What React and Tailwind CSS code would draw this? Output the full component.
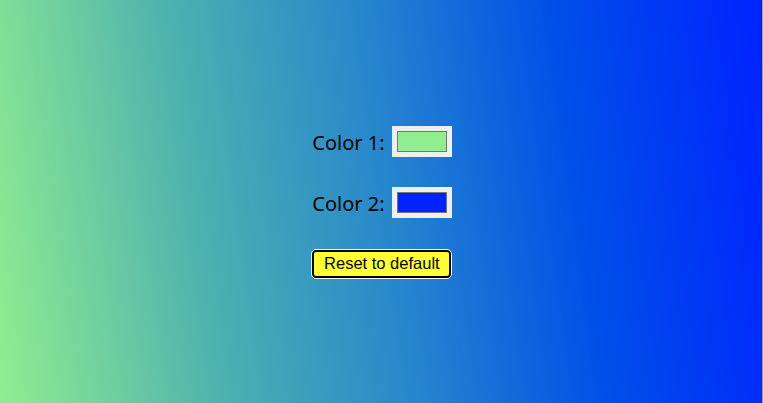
import React from 'react';

function Swatch({ color }) {
    return (
        <div className="w-[60px] h-[31px] bg-[#efefef] p-[5px] flex">
            <div className="flex-1 border border-[#767676]" style={{ backgroundColor: color }} />
        </div>
    );
}

function App() {
    const color1 = '#90ee90';
    const color2 = '#0022ff';

    return (
        <div className="h-[403px] w-full flex items-center justify-center bg-[linear-gradient(82deg,#90ee90_0%,#4cb0b0_28%,#2888cc_50%,#0050e8_74%,#0022ff_100%)] border-r border-[#a0a0a0]">
            <div className="flex flex-col items-start ml-[2px] font-['Noto_Sans',sans-serif] text-[20px] text-black">
                <div className="flex items-center gap-[7px]">
                    <span className="mt-[4px] leading-[24px]">Color 1:</span>
                    <Swatch color={color1} />
                </div>
                <div className="flex items-center gap-[7px] mt-[30px]">
                    <span className="mt-[4px] leading-[24px]">Color 2:</span>
                    <Swatch color={color2} />
                </div>
                {/* reset */}
                <button className="mt-[32px] w-[139px] h-[28px] rounded-[4px] border-2 border-black bg-[#ffff33] outline outline-1 outline-white font-['Liberation_Sans',sans-serif] text-[16.5px] leading-none">
                    Reset to default
                </button>
            </div>
        </div>
    );
}

export default App;
